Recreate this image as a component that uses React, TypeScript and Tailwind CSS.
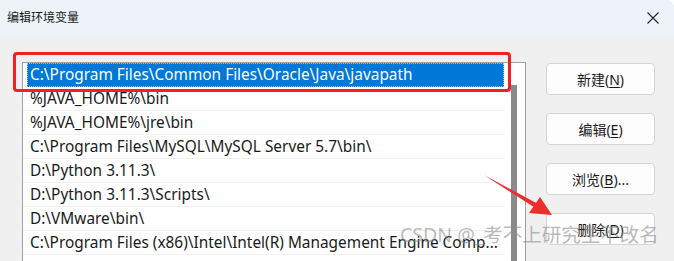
import React from "react"

const paths = [
  "C:\\Program Files\\Common Files\\Oracle\\Java\\javapath",
  "%JAVA_HOME%\\bin",
  "%JAVA_HOME%\\jre\\bin",
  "C:\\Program Files\\MySQL\\MySQL Server 5.7\\bin\\",
  "D:\\Python 3.11.3\\",
  "D:\\Python 3.11.3\\Scripts\\",
  "D:\\VMware\\bin\\",
  "C:\\Program Files (x86)\\Intel\\Intel(R) Management Engine Comp...",
]

const buttons = [
  { label: "新建", key: "N", tail: "" },
  { label: "编辑", key: "E", tail: "" },
  { label: "浏览", key: "B", tail: "..." },
  { label: "删除", key: "D", tail: "" },
]

const uiFont = { fontFamily: '"Noto Sans", "Noto Sans CJK SC", sans-serif' }

export default function App() {
  return (
    <div
      className="relative h-[261px] w-[674px] overflow-hidden rounded-tr-[8px] bg-[#f0f0f0] text-[#1a1a1a]"
      style={uiFont}
    >
      {/* title bar */}
      <div className="flex h-[36px] items-center justify-between bg-[#eef3f9] pl-[7px] pr-[14px]">
        <span className="text-[12px] leading-none">编辑环境变量</span>
        <svg width="14" height="14" viewBox="0 0 14 14" className="text-[#222]">
          <path d="M1.5 1.5 L12.5 12.5 M12.5 1.5 L1.5 12.5" stroke="currentColor" strokeWidth="1.1" />
        </svg>
      </div>

      <div className="flex pl-[22px] pt-[26px]">
        {/* list */}
        <div className="flex h-[240px] w-[504px] border border-[#a0a0a0] bg-white">
          <div className="flex-1">
            {paths.map((p, i) => (
              <div
                key={i}
                className={
                  i === 0
                    ? "ml-[4px] mr-[1px] flex h-[24px] items-center border border-dotted border-[#9cc4ea] bg-[#0078d7] pl-[2px] text-[15.4px] text-white"
                    : "flex h-[24px] items-center border-b border-[#f0f0f0] pl-[7px] text-[15.4px]"
                }
              >
                <span className="whitespace-nowrap leading-none">{p}</span>
              </div>
            ))}
          </div>
          <div className="w-[20px] pl-[6px] pt-[22px]">
            <div className="h-full w-[6px] bg-[#8a8a8a]" />
          </div>
        </div>

        {/* buttons */}
        <div className="ml-[20px] flex flex-col gap-[18px] pt-[1px]">
          {buttons.map((b) => (
            <button
              key={b.key}
              className="flex h-[32px] w-[109px] items-center justify-center rounded-[4px] border border-[#d4d4d4] bg-[#fdfdfd] text-[14px]"
            >
              {b.label}(<span className="underline underline-offset-2">{b.key}</span>){b.tail}
            </button>
          ))}
        </div>
      </div>

      {/* red highlight annotation */}
      <div className="absolute left-[13px] top-[52px] h-[40px] w-[498px] rounded-[4px] border-[3px] border-[#f22020]" />

      {/* red arrow */}
      <svg className="absolute left-0 top-0" width="674" height="261">
        <polygon points="484,175 540,205 537,209" fill="#ef2d2d" />
        <polygon points="552,215 529,213 540,197" fill="#ef2d2d" />
      </svg>

      {/* watermark */}
      <div className="absolute left-[400px] top-[225px] whitespace-nowrap text-[19.5px] leading-none text-[#8c8c8c]/60">
        CSDN @_考不上研究生不改名
      </div>
    </div>
  )
}
